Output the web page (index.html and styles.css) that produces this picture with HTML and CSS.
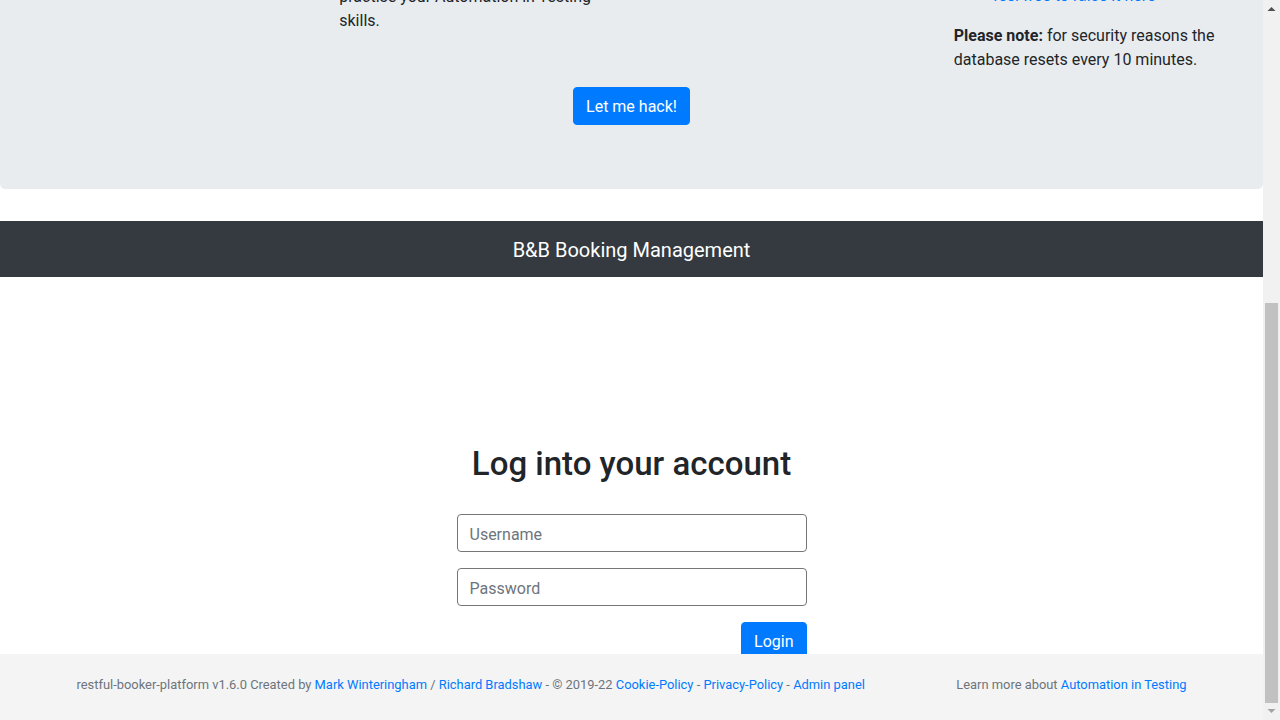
FILE: index.html
```html
<!DOCTYPE html>
<html lang="en">
<head>
<meta charset="utf-8">
<title>Restful-booker-platform demo</title>
<link rel="stylesheet" href="styles.css">
</head>
<body>
<div class="viewport">
  <div class="jumbotron">
    <div class="row">
      <div class="col"></div>
      <div class="col intro">
        <h1 class="welcome">Welcome to Restful Booker Platform</h1>
        <p>This is a shared platform that you can use to explore and test. This site and its API have been created for you to<br>practise your Automation in Testing skills.</p>
      </div>
      <div class="col"></div>
      <div class="col notes">
        <p>If you have any feedback or find a bug you would like to report,<br><a class="raise-link" href="#">feel free to raise it here</a></p>
        <p><strong>Please note:</strong> for security reasons the database resets every 10 minutes.</p>
      </div>
    </div>
    <div class="text-center">
      <button class="btn btn-primary" type="button">Let me hack!</button>
    </div>
  </div>

  <nav class="navbar">
    <span class="navbar-brand">B&amp;B Booking Management</span>
  </nav>

  <div class="login">
    <h2 class="login-title">Log into your account</h2>
    <form class="login-form">
      <div class="form-group"><input class="form-control" type="text" placeholder="Username"></div>
      <div class="form-group"><input class="form-control" type="password" placeholder="Password"></div>
      <div class="form-actions"><button class="btn btn-primary" type="button">Login</button></div>
    </form>
  </div>

  <footer class="footer">
    <div class="container">
      <div class="footer-row">
        <div class="footer-main">restful-booker-platform v1.6.0 Created by <a href="#">Mark Winteringham</a> / <a href="#">Richard Bradshaw</a> - © 2019-22 <a href="#">Cookie-Policy</a> - <a href="#">Privacy-Policy</a> - <a href="#">Admin panel</a></div>
        <div class="footer-side">Learn more about <a href="#">Automation in Testing</a></div>
      </div>
    </div>
  </footer>
</div>

<div class="scrollbar" aria-hidden="true">
  <div class="sb-btn">
    <svg width="17" height="17" viewBox="0 0 17 17"><polygon points="4.5,11 12.5,11 8.5,7" fill="#505050"/></svg>
  </div>
  <div class="sb-track"><div class="sb-thumb"></div></div>
  <div class="sb-btn">
    <svg width="17" height="17" viewBox="0 0 17 17"><polygon points="4.5,6 12.5,6 8.5,10" fill="#a3a3a3"/></svg>
  </div>
</div>
</body>
</html>
```
FILE: styles.css
```css
* { box-sizing: border-box; }

html, body {
  margin: 0;
  height: 100%;
  overflow: hidden;
}

body {
  display: flex;
  font-family: "Segoe UI", Roboto, "Liberation Sans", sans-serif;
  font-size: 16px;
  line-height: 1.5;
  color: #212529;
  background: #fff;
}

a { color: #007bff; text-decoration: none; }

p { margin: 0 0 16px; }

.viewport {
  flex: 1;
  height: 720px;
  overflow: hidden;
  display: flex;
  flex-direction: column;
  justify-content: flex-end;
  position: relative;
}

.viewport > * { flex-shrink: 0; }

/* jumbotron */
.jumbotron {
  background: #e9ecef;
  border-radius: 5px;
  padding: 64px 32px;
  margin-bottom: 32px;
}

.row {
  display: flex;
  align-items: flex-end;
  margin: 0 -15px;
}

.col {
  flex: 0 0 25%;
  max-width: 25%;
  padding: 0 15px;
}

.welcome {
  font-size: 40px;
  font-weight: 500;
  line-height: 1.2;
  margin: 0 0 8px;
}

.intro p:last-child { margin-bottom: 54px; }

.notes p:last-child { margin-bottom: 15px; }

.raise-link { margin-left: 39px; }

.text-center { text-align: center; }

.btn {
  display: inline-block;
  font-family: inherit;
  font-size: 16px;
  line-height: 24px;
  padding: 7px 12px 5px;
  border-radius: 4px;
  border: 1px solid transparent;
  cursor: pointer;
}

.btn-primary {
  background: #007bff;
  border-color: #007bff;
  color: #fff;
}

/* navbar */
.navbar {
  height: 56px;
  background: #343a40;
  padding: 8px 16px;
  display: flex;
  justify-content: center;
  align-items: center;
}

.navbar-brand {
  color: #fff;
  font-size: 20px;
  line-height: 30px;
  padding: 6px 0 4px;
}

/* login */
.login {
  padding: 168px 0 60px;
}

.login-title {
  text-align: center;
  font-size: 33px;
  font-weight: 500;
  line-height: 38px;
  margin: 0 0 31px;
}

.login-form {
  width: 350px;
  margin: 0 auto;
}

.form-group { margin-bottom: 16px; }

.form-control {
  display: block;
  width: 100%;
  height: 38px;
  padding: 7px 12px 5px;
  font-family: inherit;
  font-size: 16px;
  line-height: 24px;
  color: #495057;
  background: #fff;
  border: 1px solid #767676;
  border-radius: 4px;
}

.form-control::placeholder { color: #6c757d; opacity: 1; }

.form-actions { text-align: right; }

/* footer */
.footer {
  position: absolute;
  left: 0;
  right: 0;
  bottom: 0;
  height: 66px;
  background: #f4f4f4;
  padding-top: 21px;
  font-size: 12.9px;
  line-height: 20px;
  color: #6c757d;
}

.container {
  width: 1140px;
  margin: 0 auto;
  padding: 0 15px;
}

.footer-row {
  display: flex;
  margin: 0 -15px;
}

.footer-main {
  flex: 0 0 75%;
  padding: 0 15px;
  white-space: nowrap;
}

.footer-side {
  flex: 0 0 25%;
  padding: 0 15px;
  text-align: right;
  white-space: nowrap;
}

/* scrollbar */
.scrollbar {
  width: 17px;
  height: 720px;
  background: #f1f1f1;
  display: flex;
  flex-direction: column;
}

.sb-btn { height: 17px; }
.sb-btn svg { display: block; }

.sb-track {
  flex: 1;
  display: flex;
  flex-direction: column;
  justify-content: flex-end;
}

.sb-thumb {
  height: 400px;
  margin: 0 2px;
  background: #c1c1c1;
}
```
